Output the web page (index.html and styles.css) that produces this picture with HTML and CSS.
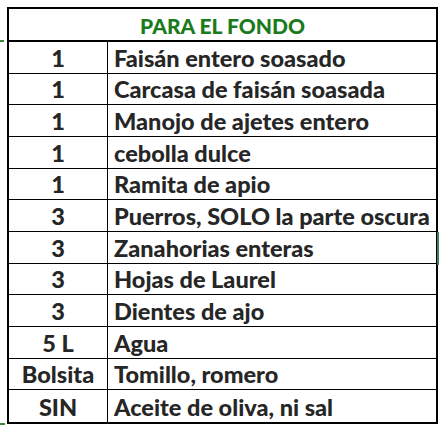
FILE: index.html
```html
<!DOCTYPE html>
<html lang="es">
<head>
<meta charset="utf-8">
<title>Para el fondo</title>
<link rel="stylesheet" href="styles.css">
</head>
<body>
<div class="sheet">
  <div class="table">
    <div class="title">PARA EL FONDO</div>
    <div class="qty">1</div><div class="item">Faisán entero soasado</div>
    <div class="qty">1</div><div class="item">Carcasa de faisán soasada</div>
    <div class="qty">1</div><div class="item">Manojo de ajetes entero</div>
    <div class="qty">1</div><div class="item">cebolla dulce</div>
    <div class="qty">1</div><div class="item">Ramita de apio</div>
    <div class="qty">3</div><div class="item">Puerros, SOLO la parte oscura</div>
    <div class="qty">3</div><div class="item">Zanahorias enteras</div>
    <div class="qty">3</div><div class="item">Hojas de Laurel</div>
    <div class="qty">3</div><div class="item">Dientes de ajo</div>
    <div class="qty">5 L</div><div class="item">Agua</div>
    <div class="qty">Bolsita</div><div class="item">Tomillo, romero</div>
    <div class="qty last">SIN</div><div class="item last">Aceite de oliva, ni sal</div>
  </div>
  <span class="mark mark-left"></span>
  <span class="mark mark-bottom"></span>
  <span class="mark mark-right"></span>
</div>
</body>
</html>
```
FILE: styles.css
```css
html, body {
  margin: 0;
  padding: 0;
  background: #ffffff;
}

.sheet {
  position: relative;
  width: 442px;
  height: 430px;
  padding: 7px 0 0 7px;
  box-sizing: border-box;
}

.table {
  box-sizing: border-box;
  width: 431px;
  height: 417px;
  border: 2px solid #000;
  display: grid;
  grid-template-columns: 99px 1fr;
  grid-template-rows: 33px repeat(12, 1fr);
  font-family: Lato, "Open Sans", sans-serif;
  font-weight: 900;
  color: #262626;
}

.title {
  grid-column: 1 / 3;
  border-bottom: 2px solid #000;
  display: flex;
  align-items: center;
  justify-content: center;
  color: #1b7a1b;
  font-size: 21px;
  padding-top: 2px;
}

.qty, .item {
  border-bottom: 1px solid #000;
  display: flex;
  align-items: center;
  font-size: 23.5px;
  padding-top: 1px;
  white-space: nowrap;
  box-sizing: border-box;
}

.qty {
  justify-content: center;
  border-right: 1px solid #000;
}

.item {
  padding-left: 6px;
}

.last {
  border-bottom: none;
}

.mark {
  position: absolute;
  background: #3a8a3a;
}

.mark-left {
  left: 0;
  top: 40px;
  width: 4px;
  height: 2px;
}

.mark-bottom {
  left: 0;
  top: 423px;
  width: 5px;
  height: 2px;
}

.mark-right {
  left: 437px;
  top: 232px;
  width: 2px;
  height: 33px;
  background: #3f7a5a;
}
```
